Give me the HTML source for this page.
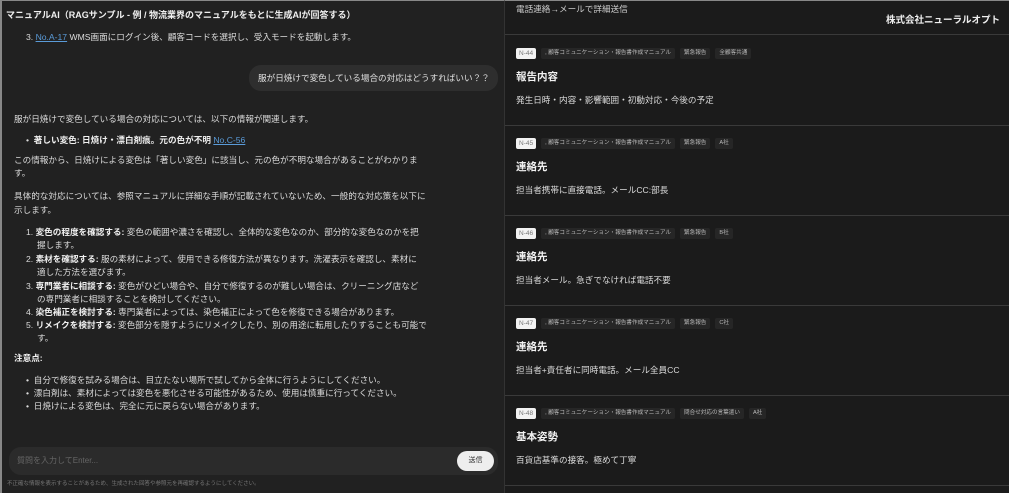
<!DOCTYPE html>
<html><head><meta charset="utf-8"><style>
*{margin:0;padding:0;box-sizing:border-box}
body{width:1009px;height:493px;overflow:hidden;background:#1b1b1b;font-family:"Liberation Sans","Noto Sans CJK JP",sans-serif;color:#e6e6e6;position:relative}
#left{position:absolute;left:0;top:0;width:504px;height:493px;background:#212121;border-top:1px solid #888;border-left:2px solid #888}
#right{position:absolute;left:504px;top:0;width:505px;height:493px;background:#1b1b1b;border-left:1px solid #333;border-top:1px solid #888}
.l{position:absolute;white-space:nowrap;font-size:8.6px;line-height:12px;color:#dcdcdc}
.b{font-weight:bold;color:#f0f0f0}
a{color:#5a9bd8;text-decoration:underline}
.bubble{position:absolute;left:247px;top:64px;width:249px;height:26px;background:#2e2e2e;border-radius:12px;font-size:8.6px;line-height:26px;padding-left:9px;color:#e0e0e0}
.input{position:absolute;left:7px;top:446px;width:489px;height:28px;background:#2b2b2b;border-radius:12px}
.send{position:absolute;left:455px;top:450px;width:37px;height:20px;background:#eee;border-radius:10px;color:#333;font-size:7px;line-height:20px;text-align:center}
.card{position:absolute;left:0;width:505px;height:90px;border-bottom:1px solid #3a3a3a}
.tags{position:absolute;left:11px;top:12px;display:flex;gap:5px;align-items:center}
.id{background:#f2f2f2;color:#777;font-size:6.5px;height:11px;line-height:11px;padding:0 3px;border-radius:2px}
.tg{background:#262626;color:#bbb;font-size:5.6px;height:11px;line-height:11px;padding:0 4px;border-radius:2px}
.ttl{position:absolute;left:11px;top:33px;font-size:10.5px;font-weight:bold;color:#f2f2f2}
.dsc{position:absolute;left:11px;top:58px;font-size:8.6px;color:#dcdcdc}
</style></head><body>
<div id="left">
<div class="l b" style="left:4px;top:8px;font-size:9px">マニュアルAI（RAGサンプル - 例 / 物流業界のマニュアルをもとに生成AIが回答する）</div>
<div class="l" style="left:24px;top:30px">3. <a>No.A-17</a> WMS画面にログイン後、顧客コードを選択し、受入モードを起動します。</div>
<div class="bubble">服が日焼けで変色している場合の対応はどうすればいい？？</div>
<div class="l" style="left:12px;top:112px">服が日焼けで変色している場合の対応については、以下の情報が関連します。</div>
<div class="l" style="left:24px;top:133px">•&nbsp; <span class="b">著しい変色: 日焼け・漂白剤痕。元の色が不明</span> <a>No.C-56</a></div>
<div class="l" style="left:12px;top:153px">この情報から、日焼けによる変色は「著しい変色」に該当し、元の色が不明な場合があることがわかりま</div>
<div class="l" style="left:12px;top:166px">す。</div>
<div class="l" style="left:12px;top:189px">具体的な対応については、参照マニュアルに詳細な手順が記載されていないため、一般的な対応策を以下に</div>
<div class="l" style="left:12px;top:203px">示します。</div>
<div class="l" style="left:24px;top:225px">1. <span class="b">変色の程度を確認する:</span> 変色の範囲や濃さを確認し、全体的な変色なのか、部分的な変色なのかを把</div>
<div class="l" style="left:35px;top:238px">握します。</div>
<div class="l" style="left:24px;top:252px">2. <span class="b">素材を確認する:</span> 服の素材によって、使用できる修復方法が異なります。洗濯表示を確認し、素材に</div>
<div class="l" style="left:35px;top:265px">適した方法を選びます。</div>
<div class="l" style="left:24px;top:279px">3. <span class="b">専門業者に相談する:</span> 変色がひどい場合や、自分で修復するのが難しい場合は、クリーニング店など</div>
<div class="l" style="left:35px;top:292px">の専門業者に相談することを検討してください。</div>
<div class="l" style="left:24px;top:305px">4. <span class="b">染色補正を検討する:</span> 専門業者によっては、染色補正によって色を修復できる場合があります。</div>
<div class="l" style="left:24px;top:318px">5. <span class="b">リメイクを検討する:</span> 変色部分を隠すようにリメイクしたり、別の用途に転用したりすることも可能で</div>
<div class="l" style="left:35px;top:331px">す。</div>
<div class="l b" style="left:12px;top:351px">注意点:</div>
<div class="l" style="left:24px;top:373px">•&nbsp; 自分で修復を試みる場合は、目立たない場所で試してから全体に行うようにしてください。</div>
<div class="l" style="left:24px;top:386px">•&nbsp; 漂白剤は、素材によっては変色を悪化させる可能性があるため、使用は慎重に行ってください。</div>
<div class="l" style="left:24px;top:399px">•&nbsp; 日焼けによる変色は、完全に元に戻らない場合があります。</div>
<div class="input"><div style="position:absolute;left:8px;top:8px;font-size:8px;color:#666">質問を入力してEnter...</div></div>
<div class="send">送信</div>
<div class="l" style="left:5px;top:477px;font-size:5.5px;color:#777">不正確な情報を表示することがあるため、生成された回答や参照元を再確認するようにしてください。</div>
</div>
<div id="right">
<div style="position:absolute;left:0;top:0;width:505px;height:34px;border-bottom:1px solid #3a3a3a">
<div style="position:absolute;left:11px;top:2px;font-size:8.6px;color:#ccc">電話連絡→メールで詳細送信</div>
<div style="position:absolute;right:10px;top:11px;font-size:9.5px;font-weight:bold;color:#eee">株式会社ニューラルオプト</div>
</div>
<div class="card" style="top:35px"><div class="tags"><span class="id">N-44</span><span class="tg">, 顧客コミュニケーション・報告書作成マニュアル</span><span class="tg">緊急報告</span><span class="tg">全顧客共通</span></div><div class="ttl">報告内容</div><div class="dsc">発生日時・内容・影響範囲・初動対応・今後の予定</div></div>
<div class="card" style="top:125px"><div class="tags"><span class="id">N-45</span><span class="tg">, 顧客コミュニケーション・報告書作成マニュアル</span><span class="tg">緊急報告</span><span class="tg">A社</span></div><div class="ttl">連絡先</div><div class="dsc">担当者携帯に直接電話。メールCC:部長</div></div>
<div class="card" style="top:215px"><div class="tags"><span class="id">N-46</span><span class="tg">, 顧客コミュニケーション・報告書作成マニュアル</span><span class="tg">緊急報告</span><span class="tg">B社</span></div><div class="ttl">連絡先</div><div class="dsc">担当者メール。急ぎでなければ電話不要</div></div>
<div class="card" style="top:305px"><div class="tags"><span class="id">N-47</span><span class="tg">, 顧客コミュニケーション・報告書作成マニュアル</span><span class="tg">緊急報告</span><span class="tg">C社</span></div><div class="ttl">連絡先</div><div class="dsc">担当者+責任者に同時電話。メール全員CC</div></div>
<div class="card" style="top:395px"><div class="tags"><span class="id">N-48</span><span class="tg">, 顧客コミュニケーション・報告書作成マニュアル</span><span class="tg">問合せ対応の言葉遣い</span><span class="tg">A社</span></div><div class="ttl">基本姿勢</div><div class="dsc">百貨店基準の接客。極めて丁寧</div></div>
</div>
</body></html>
